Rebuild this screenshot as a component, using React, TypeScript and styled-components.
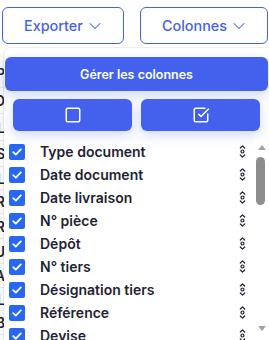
import React from 'react';
import styled, { createGlobalStyle } from 'styled-components';
import { ChevronDown, Square, SquareCheckBig } from 'lucide-react';

const GlobalStyle = createGlobalStyle`
    html, body {
        margin: 0;
        padding: 0;
        background: #ffffff;
        font-family: Inter, "Noto Sans", sans-serif;
    }
`;

const Page = styled.div`
    position: relative;
    width: 269px;
    height: 340px;
    overflow: hidden;
    background: #ffffff;
`;

const Toolbar = styled.div`
    display: flex;
    justify-content: space-between;
    padding: 7px 1px 0 2px;
`;

const OutlineButton = styled.button`
    display: flex;
    align-items: center;
    gap: 2px;
    height: 37px;
    padding: 0 18px 0 21px;
    border: 1px solid #4461ee;
    border-radius: 6px;
    background: #ffffff;
    color: #4461ee;
    font-family: Inter, sans-serif;
    font-size: 14.4px;
    font-weight: 500;
    cursor: pointer;
`;

const BackTable = styled.div`
    display: flex;
    flex-direction: column;
    margin-top: 16px;
    width: 5px;
`;

const BackRow = styled.div<{ $h: number }>`
    display: flex;
    justify-content: flex-end;
    align-items: center;
    height: ${props => props.$h}px;
    overflow: hidden;
    border-bottom: 1px solid #eceef2;
    font-size: 14px;
    font-weight: 600;
    color: #1f2333;
    white-space: nowrap;
`;

const Panel = styled.div`
    position: absolute;
    top: 48px;
    left: 4px;
    right: 0;
    bottom: 0;
    display: flex;
    flex-direction: column;
    background: #ffffff;
    border-radius: 6px 0 0 0;
    box-shadow: 0 0 0 1px rgba(15, 23, 42, 0.05), 0 6px 16px rgba(15, 23, 42, 0.08);
`;

const ManageButton = styled.button`
    height: 34px;
    margin: 9px 1px 0 1px;
    border: none;
    border-radius: 6px;
    background: #4461ee;
    color: #ffffff;
    font-family: Inter, sans-serif;
    font-size: 12.5px;
    font-weight: 600;
    box-shadow: 0 4px 12px rgba(68, 97, 238, 0.25);
`;

const IconRow = styled.div`
    display: grid;
    grid-template-columns: 1fr 1fr;
    gap: 9px;
    padding: 8px 9px 0;
`;

const IconButton = styled.button`
    display: flex;
    align-items: center;
    justify-content: center;
    height: 32px;
    border: none;
    border-radius: 6px;
    background: #4461ee;
    color: #ffffff;
    box-shadow: 0 4px 12px rgba(68, 97, 238, 0.25);
`;

const ListArea = styled.div`
    display: flex;
    margin-top: 9px;
    height: 200px;
`;

const List = styled.div`
    flex: 1;
    overflow: hidden;
`;

const ScrollBar = styled.div`
    display: flex;
    flex-direction: column;
    flex: none;
    width: 15px;
    padding-bottom: 5px;
    background: #ffffff;
`;

const ScrollArrow = styled.div<{ $down?: boolean }>`
    display: flex;
    align-items: center;
    justify-content: center;
    height: 14px;

    &::before {
        content: '';
        width: 0;
        height: 0;
        border-left: 4px solid transparent;
        border-right: 4px solid transparent;
        ${props => (props.$down ? 'border-top: 5px solid #a3a3a3;' : 'border-bottom: 5px solid #a3a3a3;')}
    }
`;

const ScrollTrack = styled.div`
    flex: 1;
    padding: 3px 4px 0 2px;
`;

const ScrollThumb = styled.div`
    height: 48px;
    border-radius: 5px;
    background: #8d8d8d;
`;

const Row = styled.label`
    display: flex;
    align-items: center;
    height: 23px;
    padding: 0 8px 0 5px;
    gap: 15px;
`;

const Box = styled.span`
    display: flex;
    align-items: center;
    justify-content: center;
    flex: none;
    width: 16px;
    height: 16px;
    border-radius: 2px;
    background: #2668f5;
`;

const Name = styled.span`
    flex: 1;
    font-size: 14px;
    font-weight: 600;
    color: #1f2333;
    white-space: nowrap;
`;

const backRows = [
    { h: 27, t: 'P' },
    { h: 25, t: 'O' },
    { h: 26, t: 'L' },
    { h: 25, t: 'S' },
    { h: 22, t: 'L' },
    { h: 23, t: 'R' },
    { h: 24, t: 'R' },
    { h: 24, t: 'U' },
    { h: 23, t: 'A' },
    { h: 22, t: 'L' },
    { h: 23, t: 'B' },
    { h: 24, t: 'L' },
];

const columns = [
    'Type document',
    'Date document',
    'Date livraison',
    'N° pièce',
    'Dépôt',
    'N° tiers',
    'Désignation tiers',
    'Référence',
    'Devise',
    'Montant HT',
    'Montant TVA',
    'Montant TTC',
    'Statut',
    'Commercial',
];

const Check = () => (
    <svg width="10" height="8" viewBox="0 0 10 8" fill="none">
        <path d="M1.2 4.2 L3.8 6.6 L8.8 1.4" stroke="#ffffff" strokeWidth="1.8" strokeLinecap="round" strokeLinejoin="round" />
    </svg>
);

const DragHandle = () => (
    <svg width="7" height="15" viewBox="0 0 7 15" fill="none" stroke="#1f2333" strokeWidth="1.2" strokeLinecap="round" strokeLinejoin="round">
        <path d="M1.3 4 L3.5 1.8 L5.7 4" />
        <circle cx="3.5" cy="7.5" r="1.5" />
        <path d="M1.3 11 L3.5 13.2 L5.7 11" />
    </svg>
);

const App: React.FunctionComponent = () => (
    <Page>
        <GlobalStyle />
        <Toolbar>
            <OutlineButton>
                Exporter
                <ChevronDown size={20} strokeWidth={1.25} />
            </OutlineButton>
            <OutlineButton>
                Colonnes
                <ChevronDown size={20} strokeWidth={1.25} />
            </OutlineButton>
        </Toolbar>
        <BackTable>
            {backRows.map((r, i) => (
                <BackRow key={i} $h={r.h}>{r.t}</BackRow>
            ))}
        </BackTable>
        <Panel>
            <ManageButton>Gérer les colonnes</ManageButton>
            <IconRow>
                <IconButton><Square size={18} strokeWidth={2} /></IconButton>
                <IconButton><SquareCheckBig size={18} strokeWidth={2} /></IconButton>
            </IconRow>
            <ListArea>
                <List>
                    {columns.map(name => (
                        <Row key={name}>
                            <Box><Check /></Box>
                            <Name>{name}</Name>
                            <DragHandle />
                        </Row>
                    ))}
                </List>
                <ScrollBar>
                    <ScrollArrow />
                    <ScrollTrack>
                        <ScrollThumb />
                    </ScrollTrack>
                    <ScrollArrow $down />
                </ScrollBar>
            </ListArea>
        </Panel>
    </Page>
);

export default App;
